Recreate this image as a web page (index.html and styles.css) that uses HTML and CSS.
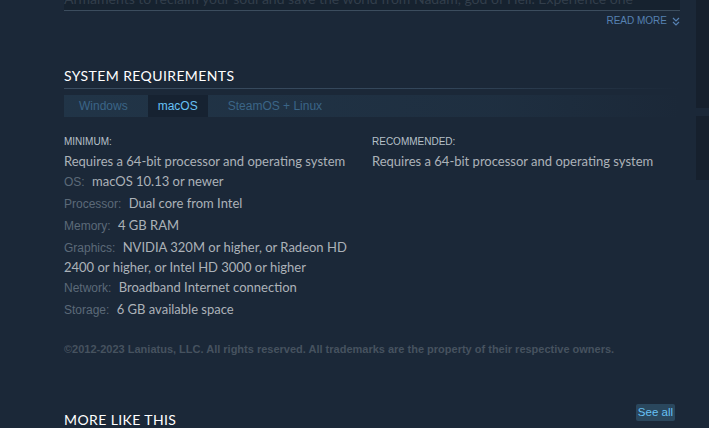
FILE: index.html
```html
<!DOCTYPE html>
<html lang="en">
<head>
  <meta charset="UTF-8">
  <title>System Requirements</title>
  <link rel="stylesheet" href="styles.css">
</head>
<body>

  <div class="page">

    <!-- main column -->
    <div class="main">

      <div class="desc-fade">
        <p>Armaments to reclaim your soul and save the world from Nadam, god of Hell. Experience one</p>
      </div>
      <div class="read-more">
        READ MORE
        <svg width="8" height="9" viewBox="0 0 8 9"><path d="M1 1l3 3 3-3M1 5l3 3 3-3" fill="none" stroke="currentColor" stroke-width="1.2"/></svg>
      </div>

      <!-- system requirements -->
      <h2 class="section-title">System Requirements</h2>
      <div class="sysreq-tabs">
        <span class="tab">Windows</span>
        <span class="tab active">macOS</span>
        <span class="tab">SteamOS + Linux</span>
      </div>

      <div class="sysreq">
        <div class="sysreq-col">
          <div class="sysreq-head">Minimum:</div>
          <ul>
            <li class="first">Requires a 64-bit processor and operating system</li>
            <li class="first"><strong>OS:</strong> macOS 10.13 or newer</li>
            <li><strong>Processor:</strong> Dual core from Intel</li>
            <li><strong>Memory:</strong> 4 GB RAM</li>
            <li><strong>Graphics:</strong> NVIDIA 320M or higher, or Radeon HD 2400 or higher, or Intel HD 3000 or higher</li>
            <li class="first"><strong>Network:</strong> Broadband Internet connection</li>
            <li><strong>Storage:</strong> 6 GB available space</li>
          </ul>
        </div>
        <div class="sysreq-col">
          <div class="sysreq-head">Recommended:</div>
          <ul>
            <li class="first">Requires a 64-bit processor and operating system</li>
          </ul>
        </div>
      </div>

      <p class="legal">©2012-2023 Laniatus, LLC. All rights reserved. All trademarks are the property of their respective owners.</p>

      <!-- more like this -->
      <div class="more-head">
        <h2 class="section-title plain">More Like This</h2>
        <a class="see-all">See all</a>
      </div>

    </div>

    <!-- right column -->
    <div class="side">
      <div class="side-box tall"></div>
      <div class="side-box"></div>
    </div>

  </div>

</body>
</html>
```

FILE: styles.css
```css
* {
  box-sizing: border-box;
}

body {
  margin: 0;
  background-color: #1b2838;
  font-family: 'Lato', 'Liberation Sans', sans-serif;
  color: #acb2b8;
  overflow: hidden;
}

.page {
  display: flex;
  gap: 16px;
  padding-left: 64px;
}

.main {
  width: 616px;
  flex-shrink: 0;
}

/* description fade */
.desc-fade {
  height: 11px;
  overflow: hidden;
  border-bottom: 1px solid #3c4d5e;
  background: rgba(0, 0, 0, 0.15);
}

.desc-fade p {
  margin: -10px 0 0;
  font-size: 14px;
  line-height: 18px;
  color: #323e4b;
  white-space: nowrap;
}

.read-more {
  display: flex;
  justify-content: flex-end;
  align-items: center;
  gap: 5px;
  margin-top: 4px;
  font-family: 'Liberation Sans', Arial, sans-serif;
  font-size: 10px;
  line-height: 12px;
  color: #5681b2;
}

/* section headings */
.section-title {
  margin: 40px 0 0;
  padding-bottom: 4px;
  font-size: 14px;
  font-weight: normal;
  line-height: 18px;
  letter-spacing: 0.4px;
  text-transform: uppercase;
  color: #fff;
  background: linear-gradient(to right, #3b4d60 0%, #33465a 60%, rgba(51, 70, 90, 0) 100%) no-repeat left bottom / 100% 1px;
}

.section-title.plain {
  margin: 0;
  padding: 7px 0 0;
  background: none;
}

/* tabs */
.sysreq-tabs {
  display: flex;
  gap: 10px;
  margin-top: 6px;
  padding-left: 5px;
  background: linear-gradient(to right, rgba(42, 71, 94, 0.4) 0%, rgba(42, 71, 94, 0.22) 70%, rgba(42, 71, 94, 0) 100%);
  font-family: 'Liberation Sans', Arial, sans-serif;
  font-size: 12px;
  line-height: 22px;
}

.tab {
  padding: 0 10px;
  color: #3b6587;
}

.tab.active {
  background-color: #162231;
  color: #67c1f5;
}

/* requirements */
.sysreq {
  display: grid;
  grid-template-columns: 288px 1fr;
  column-gap: 20px;
  margin-top: 19px;
}

.sysreq-head {
  font-family: 'Liberation Sans', Arial, sans-serif;
  font-size: 10px;
  line-height: 12px;
  text-transform: uppercase;
  color: #b6c0c9;
}

.sysreq ul {
  margin: 3px 0 0;
  padding: 0;
  list-style: none;
}

.sysreq li {
  font-size: 13px;
  line-height: 20px;
  margin-top: 2px;
}

.sysreq li.first {
  margin-top: 0;
}

.sysreq li strong {
  font-family: 'Liberation Sans', Arial, sans-serif;
  font-size: 12px;
  font-weight: normal;
  line-height: 12px;
  color: #5c6a78;
  margin-right: 4px;
}

/* footer bits */
.legal {
  margin: 23px 0 0;
  font-family: 'Liberation Sans', Arial, sans-serif;
  font-size: 11px;
  font-weight: bold;
  line-height: 14px;
  color: #46525f;
}

.more-head {
  display: flex;
  justify-content: space-between;
  align-items: flex-start;
  margin-top: 48px;
  padding-right: 5px;
}

.see-all {
  padding: 0 2px;
  font-family: 'Liberation Sans', Arial, sans-serif;
  font-size: 11.5px;
  line-height: 17px;
  color: #67c1f5;
  background-color: rgba(103, 193, 245, 0.2);
  border-radius: 2px;
}

/* right column */
.side {
  flex: 1;
  display: flex;
  flex-direction: column;
  gap: 8px;
}

.side-box {
  height: 64px;
  background-color: rgba(0, 0, 0, 0.18);
}

.side-box.tall {
  height: 108px;
}
```
